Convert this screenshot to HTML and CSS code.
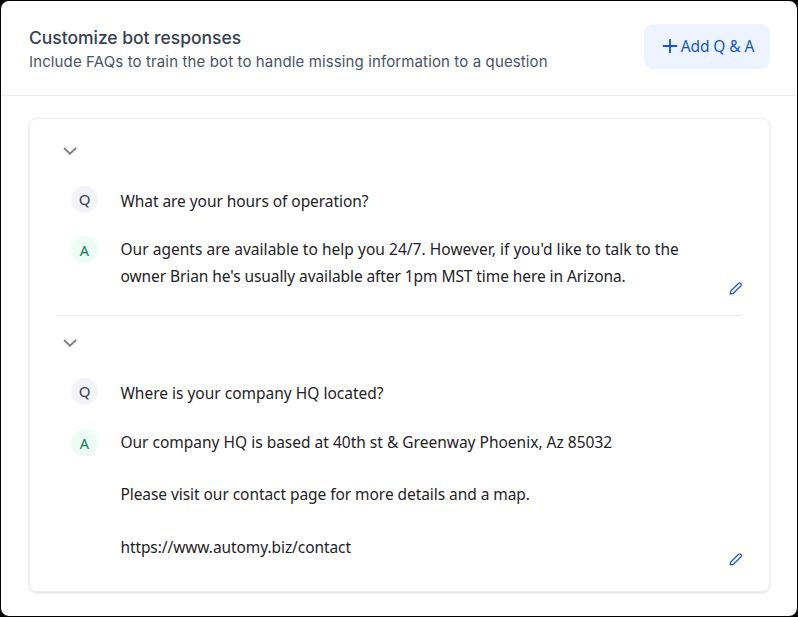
FILE: index.html
```html
<!DOCTYPE html>
<html lang="en">
<head>
<meta charset="utf-8">
<title>Customize bot responses</title>
<link rel="stylesheet" href="styles.css">
</head>
<body>
<main class="panel">
  <header class="header">
    <div>
      <h1 class="title">Customize bot responses</h1>
      <p class="subtitle">Include FAQs to train the bot to handle missing information to a question</p>
    </div>
    <button class="add"><svg width="16" height="16" viewBox="0 0 16 16"><path d="M8 1v14M1 8h14"/></svg><span class="add-label">Add Q &amp; A</span></button>
  </header>
  <section class="card">
    <article class="item">
      <svg class="chevron" width="14" height="10" viewBox="0 0 14 10"><path d="M1 2 7 7.7 13 2"/></svg>
      <div class="row question"><span class="badge">Q</span><p class="text"><span class="q1">What are your hours of operation?</span></p></div>
      <div class="row answer"><span class="badge green">A</span><p class="text"><span class="a1">Our agents are available to help you 24/7. However, if you'd like to talk to the</span><br><span class="a2">owner Brian he's usually available after 1pm MST time here in Arizona.</span></p></div>
      <svg class="edit" width="14" height="14" viewBox="0 0 14 14"><path d="M1.2 12.8 1.6 10.2 9.6 2.2a1.8 1.8 0 0 1 2.5 2.5l-8 7.8z"/></svg>
    </article>
    <article class="item second">
      <svg class="chevron" width="14" height="10" viewBox="0 0 14 10"><path d="M1 2 7 7.7 13 2"/></svg>
      <div class="row question"><span class="badge">Q</span><p class="text"><span class="q2">Where is your company HQ located?</span></p></div>
      <div class="row answer"><span class="badge green">A</span><div class="text long"><p><span class="b1">Our company HQ is based at 40th st &amp; Greenway Phoenix, Az 85032</span></p><p><span class="b2">Please visit our contact page for more details and a map.</span></p><p><span class="b3">https://www.automy.biz/contact</span></p></div></div>
      <svg class="edit" width="14" height="14" viewBox="0 0 14 14"><path d="M1.2 12.8 1.6 10.2 9.6 2.2a1.8 1.8 0 0 1 2.5 2.5l-8 7.8z"/></svg>
    </article>
  </section>
</main>
</body>
</html>
```
FILE: styles.css
```css
* { box-sizing: border-box; }
body { margin: 0; background: #000; }
h1, p { margin: 0; }
svg { fill: none; display: block; }
.panel { width: 798px; height: 617px; border: 1px solid #000; border-radius: 9px; background: #fff; }
.header { height: 95px; padding: 23px 27px 0 28px; display: flex; justify-content: space-between; border-bottom: 1px solid #e9ebee; font-family: Inter, sans-serif; }
.title { padding-top: 1px; font-size: 17.5px; line-height: 26px; font-weight: 500; letter-spacing: -.03px; color: #374151; white-space: nowrap; }
.subtitle { font-size: 15px; line-height: 22px; letter-spacing: .125px; color: #475467; white-space: nowrap; }
.add { width: 126px; height: 45px; padding: 0 0 1px 2px; border: 0; border-radius: 9px; background: #eef4ff; color: #1155cf; display: flex; align-items: center; justify-content: center; gap: 3px; font: 15.5px "Noto Sans", sans-serif; letter-spacing: -.08px; white-space: nowrap; }
.add svg { stroke: currentColor; stroke-width: 1.8; }
.card { width: 741px; height: 474px; margin: 22px 0 0 28px; padding: 0 27px 0 26px; border: 1px solid #eceef0; border-radius: 8px; box-shadow: 0 1px 3px #0002; }
.item { height: 197px; padding: 27px 0 0 7px; display: flex; flex-direction: column; border-bottom: 1px solid #e9ebee; }
.second { height: 276px; border: 0; padding-top: 22px; }
.chevron { stroke: #7b7f86; stroke-width: 1.8; }
.row { display: flex; gap: 22px; margin-left: 8px; }
.question { margin-top: 30px; }
.question .text { padding-top: 2px; }
.answer { margin-top: 21px; }
.badge { flex: none; width: 27px; height: 27px; padding-bottom: 2px; border-radius: 50%; background: #f2f4f7; color: #374151; display: flex; align-items: center; justify-content: center; font: 15px "Noto Sans", sans-serif; }
.green { background: #ebfdf4; color: #128052; font-size: 14.5px; padding-bottom: 0; }
.text { font: 15.5px/27px "Noto Sans", sans-serif; color: #1f2328; white-space: nowrap; }
.text span { margin-left: .4px; }
.q1 { letter-spacing: -.06px; }
.a1 { letter-spacing: .035px; }
.a2, .b3 { letter-spacing: -.08px; }
.b2 { letter-spacing: -.06px; }
.edit { stroke: #1d5bd0; stroke-width: 1.3; stroke-linejoin: round; align-self: flex-end; margin: -9px -1px 0 0; }
.second .answer { margin-top: 22px; }
.long p + p { margin-top: 25.4px; }
```
